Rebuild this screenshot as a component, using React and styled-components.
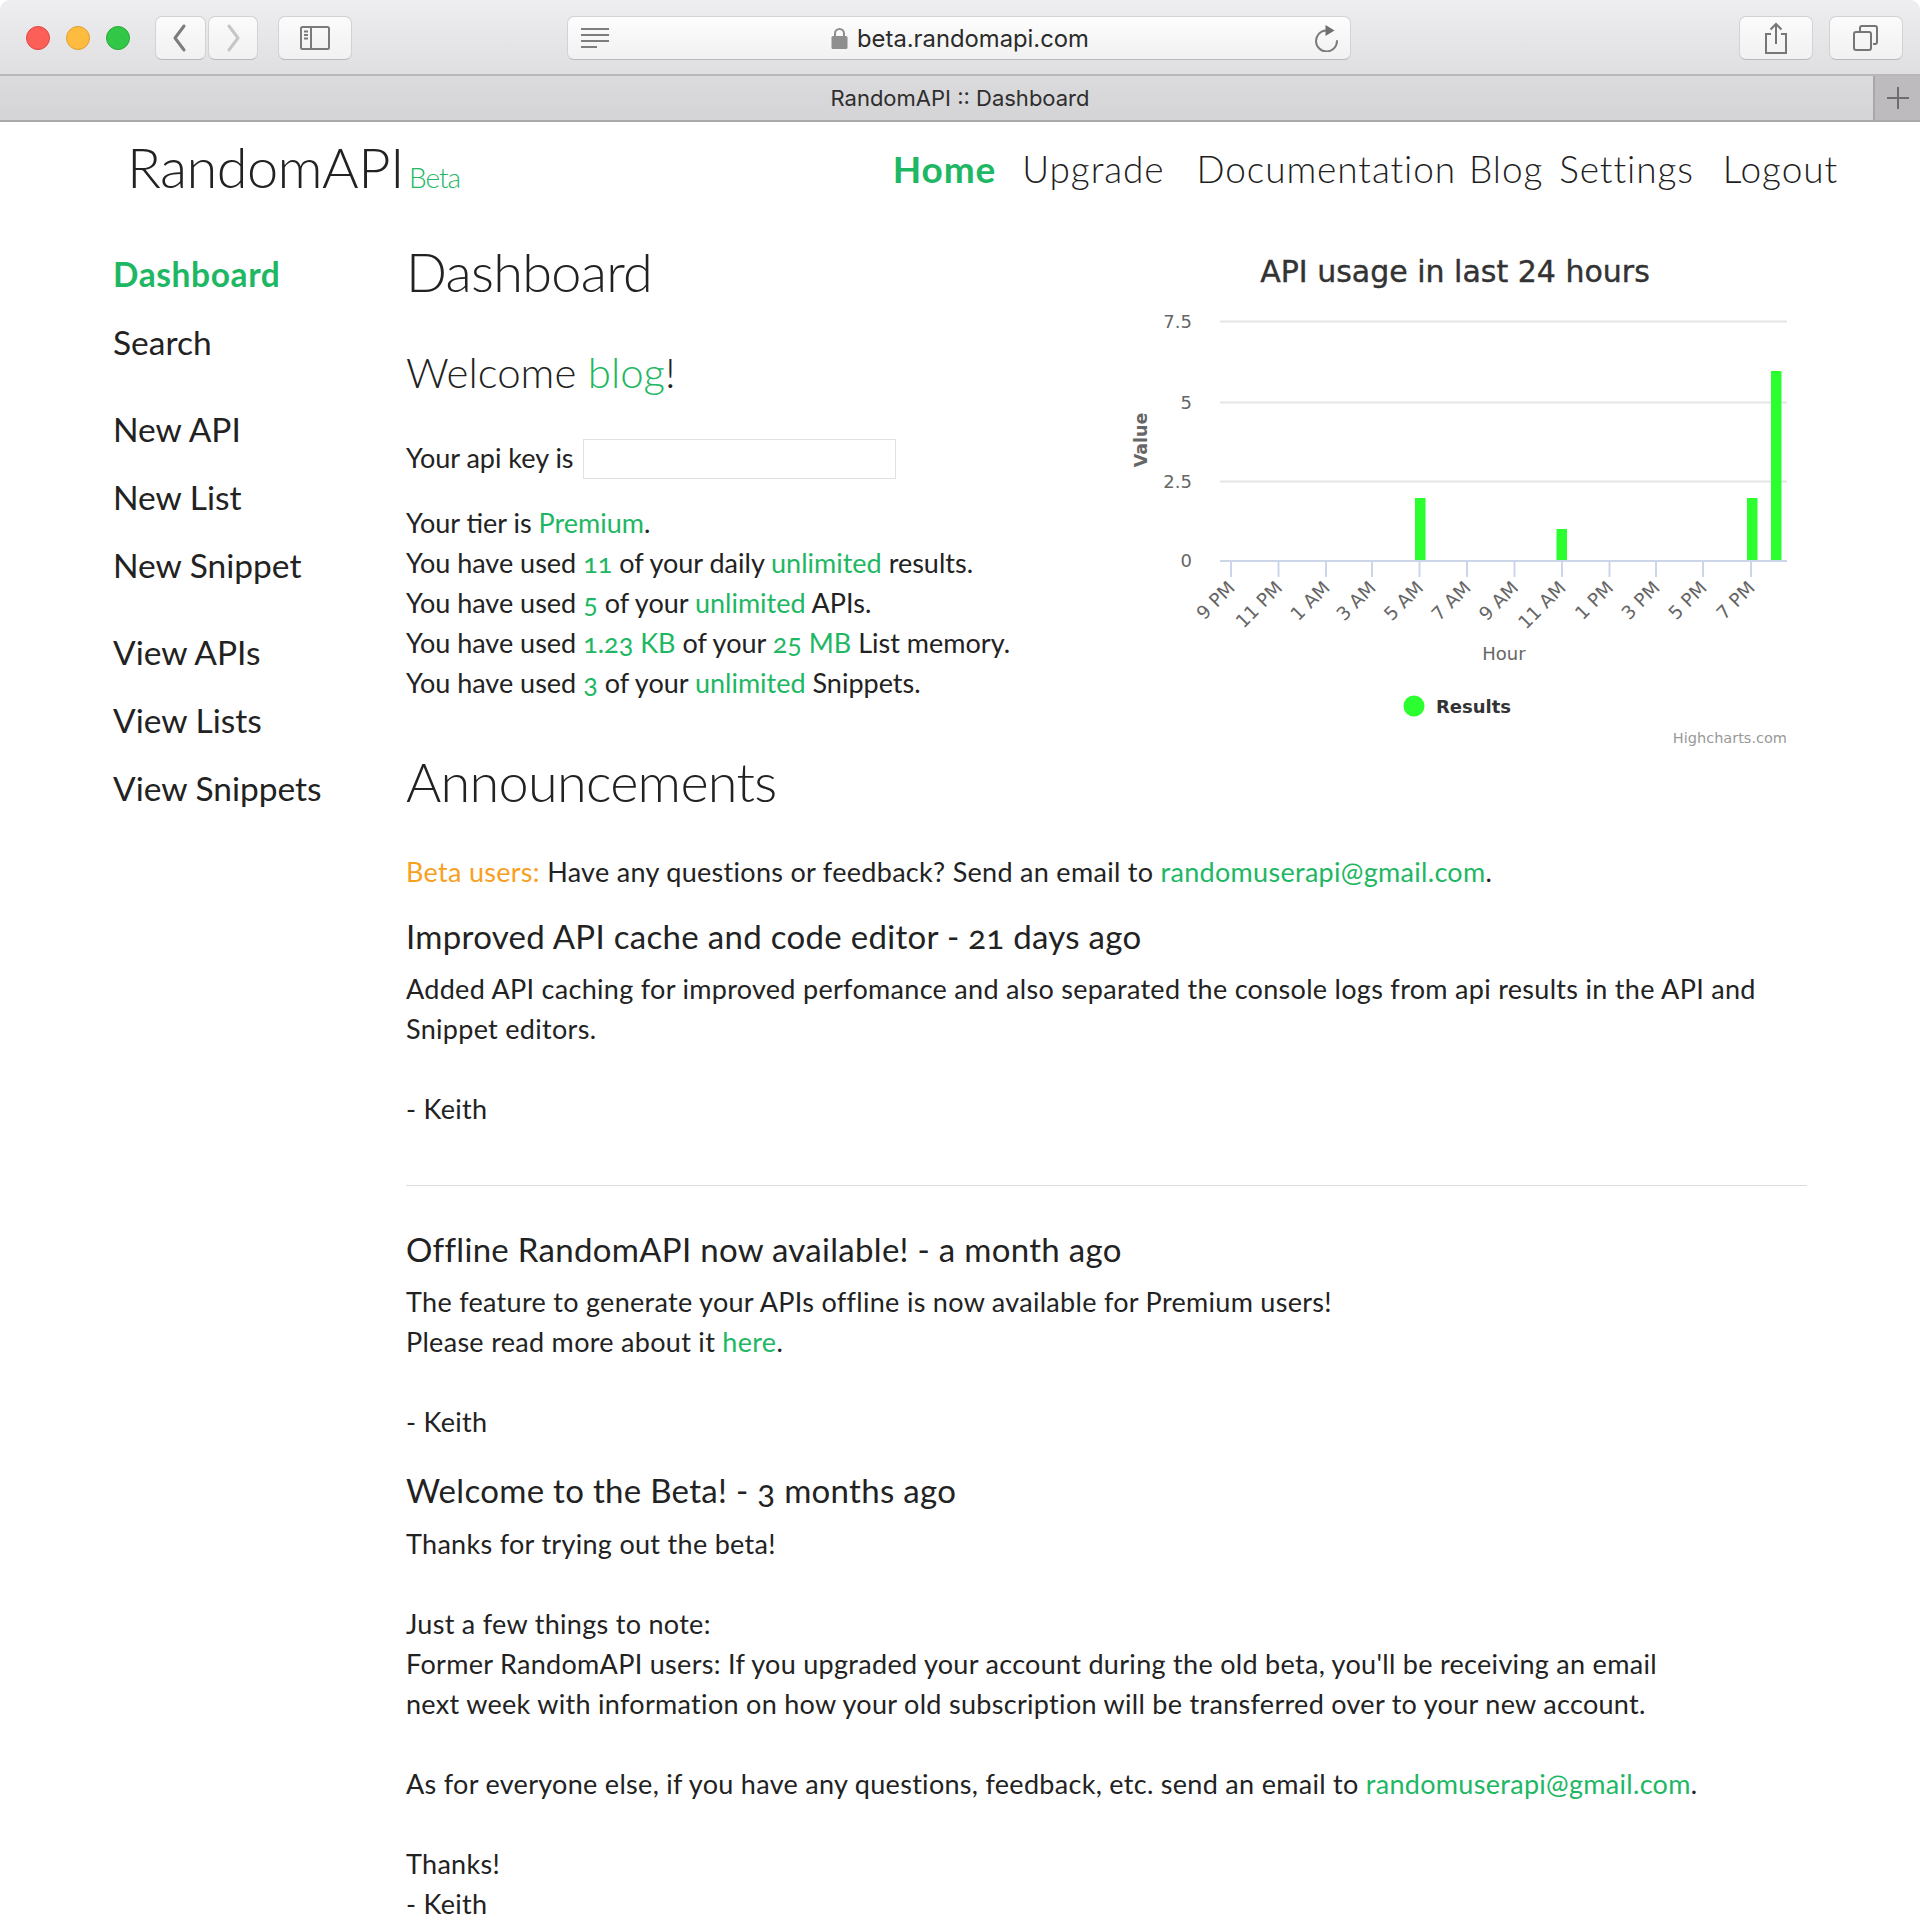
import styled, { createGlobalStyle } from "styled-components";

const GREEN = "#1eb763";

const GlobalStyle = createGlobalStyle`
  html, body {
    margin: 0;
    padding: 0;
    background: #fff;
  }
  body {
    font-family: "Lato", "Open Sans", sans-serif;
    color: #222;
    overflow: hidden;
  }
  #root {
    height: 1920px;
    overflow: hidden;
  }
`;

const Page = styled.div`
  width: 1920px;
`;

const Toolbar = styled.div`
  height: 76px;
  box-sizing: border-box;
  padding: 16px 16px 0 26px;
  display: flex;
  align-items: flex-start;
  background: linear-gradient(#eeedf0, #dfdee1);
  border-bottom: 2px solid #b8b6b9;
  border-radius: 10px 10px 0 0;
`;

const Lights = styled.div`
  display: flex;
  gap: 16px;
  height: 44px;
  align-items: center;
  margin-right: 25px;
`;

const Light = styled.span`
  width: 24px;
  height: 24px;
  border-radius: 50%;
  box-sizing: border-box;
  background: ${(p) => p.$fill};
  border: 1px solid ${(p) => p.$edge};
`;

const ToolButton = styled.div`
  width: ${(p) => p.$w}px;
  height: 44px;
  margin-left: ${(p) => p.$ml || 0}px;
  box-sizing: border-box;
  display: flex;
  align-items: center;
  justify-content: center;
  background: linear-gradient(#fbfbfb, #f1f1f1);
  border: 1px solid #d2d1d3;
  border-bottom-color: #b9b8ba;
  border-radius: 7px;
  flex: none;
`;

const AddressBar = styled.div`
  width: 784px;
  height: 44px;
  margin-left: 215px;
  margin-right: 388px;
  padding: 0 10px 0 12px;
  box-sizing: border-box;
  flex: none;
  display: flex;
  align-items: center;
  background: linear-gradient(#fdfdfd, #f1f1f1);
  border: 1px solid #d2d1d3;
  border-bottom-color: #b9b8ba;
  border-radius: 7px;
`;

const Url = styled.div`
  flex: 1;
  display: flex;
  align-items: center;
  justify-content: center;
  gap: 9px;
  padding-right: 4px;
  font-family: "Inter", "Roboto", sans-serif;
  font-size: 23.8px;
  color: #2b2b2b;
`;

const TabBar = styled.div`
  height: 46px;
  box-sizing: border-box;
  display: flex;
  background: linear-gradient(#dbdadc, #d4d3d5);
  border-bottom: 2px solid #aaa8ab;
`;

const TabTitle = styled.div`
  flex: 1;
  padding-left: 47px;
  text-align: center;
  line-height: 44px;
  font-family: "Inter", "Roboto", sans-serif;
  font-size: 22px;
  color: #2e2e2e;
`;

const NewTab = styled.div`
  width: 47px;
  box-sizing: border-box;
  display: flex;
  align-items: center;
  justify-content: center;
  background: #bdbbbe;
  border-left: 2px solid #a9a7aa;
`;

const Header = styled.header`
  height: 96px;
  box-sizing: border-box;
  padding: 0 82px 0 127px;
  display: flex;
  align-items: center;
  justify-content: space-between;
`;

const Logo = styled.div`
  margin-top: -8px;
  font-size: 56px;
  font-weight: 300;
  letter-spacing: -0.6px;
  color: #222;
  display: flex;
  align-items: baseline;
  gap: 5px;
`;

const LogoTag = styled.span`
  font-size: 28px;
  color: ${GREEN};
  font-weight: 300;
  letter-spacing: -1px;
`;

const Nav = styled.nav`
  display: flex;
  margin-top: -3px;
  font-size: 37px;
  letter-spacing: 0.9px;
`;

const NavItem = styled.a`
  margin-left: ${(p) => p.$ml || 0}px;
  color: ${(p) => (p.$active ? GREEN : "#1f1f1f")};
  font-weight: ${(p) => (p.$active ? 700 : 300)};
`;

const Main = styled.main`
  display: flex;
  padding: 24px 0 0 113px;
`;

const Sidebar = styled.aside`
  width: 293px;
  flex: none;
  padding-top: 12px;
`;

const SideGroup = styled.div`
  margin-bottom: 47px;
  display: flex;
  flex-direction: column;
  gap: 28px;
`;

const SideItem = styled.a`
  font-size: 33.5px;
  line-height: 40px;
  color: ${(p) => (p.$active ? GREEN : "#222")};
  font-weight: ${(p) => (p.$active ? 700 : 400)};
  letter-spacing: ${(p) => (p.$active ? "0.6px" : "0")};
`;

const Content = styled.div`
  width: 1401px;
  flex: none;
`;

const Top = styled.section`
  display: flex;
  justify-content: space-between;
  height: 510px;
`;

const Intro = styled.div`
  width: 700px;
`;

const PageTitle = styled.h1`
  margin: 0;
  font-size: 54px;
  line-height: 60px;
  font-weight: 300;
  letter-spacing: -0.7px;
  color: #222;
`;

const Welcome = styled.h2`
  margin: 45px 0 0;
  font-size: 42px;
  line-height: 50px;
  font-weight: 300;
`;

const Accent = styled.span`
  color: ${(p) => p.$color || GREEN};
`;

const KeyRow = styled.div`
  margin-top: 40px;
  display: flex;
  align-items: center;
  gap: 9px;
`;

const KeyBox = styled.div`
  width: 313px;
  height: 40px;
  margin-top: 2px;
  box-sizing: border-box;
  border: 1px solid #e2e2e2;
`;

const Text = styled.div`
  font-size: 27px;
  line-height: 40px;
  font-variant-numeric: oldstyle-nums;
`;

const BodyText = styled(Text)`
  margin-top: ${(p) => p.$mt || 0}px;
  letter-spacing: 0.3px;
`;

const Stats = styled.div`
  margin-top: 24px;
`;

const ChartWrap = styled.div`
  width: 680px;
  margin-top: -2px;
  flex: none;
`;

const ChartSvg = styled.svg`
  display: block;
  font-family: "DejaVu Sans", sans-serif;
`;

const Item = styled.article`
  margin-top: ${(p) => p.$mt}px;
`;

const ItemTitle = styled.h3`
  margin: 0 0 ${(p) => p.$mb || 13}px;
  font-size: 33px;
  line-height: 40px;
  font-weight: 400;
  letter-spacing: 0.3px;
  font-variant-numeric: oldstyle-nums;
`;

const Rule = styled.hr`
  margin: 56px 0 0;
  border: 0;
  border-top: 1px solid #ddd;
`;

const Chevron = ({ d, color }) => (
  <svg width="20" height="30" viewBox="0 0 20 30" fill="none">
    <path d={d} stroke={color} strokeWidth="3" strokeLinecap="round" strokeLinejoin="round" />
  </svg>
);

const SidebarIcon = () => (
  <svg width="30" height="24" viewBox="0 0 30 24" fill="none" stroke="#7b7b7b" strokeWidth="2">
    <rect x="1" y="1" width="28" height="22" rx="1.5" />
    <path d="M11 1v22" />
    <path d="M4 5.5h4M4 9h4M4 12.5h4" />
  </svg>
);

const ReaderIcon = () => (
  <svg width="30" height="22" viewBox="0 0 30 22" fill="none" stroke="#7d7d7d" strokeWidth="2">
    <path d="M1 2h28M1 8h28M1 14h28M1 20h16" />
  </svg>
);

const LockIcon = () => (
  <svg width="17" height="21" viewBox="0 0 17 21">
    <rect x="0.5" y="8" width="16" height="13" rx="1.5" fill="#8e8e8e" />
    <path d="M4 9V5.5a4.5 4.5 0 0 1 9 0V9" fill="none" stroke="#8e8e8e" strokeWidth="2" />
  </svg>
);

const ReloadIcon = () => (
  <svg width="26" height="28" viewBox="0 0 26 28" fill="none">
    <path d="M12 6.5A10.5 10.5 0 1 0 23 17" stroke="#7b7b7b" strokeWidth="2" strokeLinecap="round" />
    <path d="M11.5 1l9 5.5-9 5.5z" fill="#6f6f6f" />
  </svg>
);

const ShareIcon = () => (
  <svg width="24" height="32" viewBox="0 0 24 32" fill="none" stroke="#767676" strokeWidth="2">
    <path d="M7 12H2v19h20V12h-5" />
    <path d="M12 22V2M6.5 7.5 12 2l5.5 5.5" />
  </svg>
);

const TabsIcon = () => (
  <svg width="26" height="26" viewBox="0 0 26 26" fill="none" stroke="#767676" strokeWidth="2">
    <rect x="1" y="7" width="17" height="18" rx="2" />
    <path d="M7 6V3a2 2 0 0 1 2-2h13a2 2 0 0 1 2 2v14a2 2 0 0 1-2 2h-2" />
  </svg>
);

const PlusIcon = () => (
  <svg width="22" height="22" viewBox="0 0 22 22" stroke="#6d6d6d" strokeWidth="2">
    <path d="M11 0v22M0 11h22" />
  </svg>
);

const tickLabels = ["9 PM", "11 PM", "1 AM", "3 AM", "5 AM", "7 AM", "9 AM", "11 AM", "1 PM", "3 PM", "5 PM", "7 PM"];
const ticks = [1231, 1278.5, 1326, 1372, 1419.5, 1467, 1514.5, 1562, 1609.5, 1656, 1703, 1751];
const gridLines = [
  { y: 321, label: "7.5" },
  { y: 402, label: "5" },
  { y: 481, label: "2.5" },
];
const bars = [
  { x: 1415, top: 498 },
  { x: 1556.5, top: 529 },
  { x: 1747, top: 498 },
  { x: 1771, top: 371 },
];

// the svg starts at page x 1127 / y 240, viewBox uses page coordinates
const UsageChart = () => (
  <ChartSvg width="680" height="510" viewBox="1127 240 680 510">
    <text x="1455" y="282" textAnchor="middle" fontSize="30" fill="#333" stroke="#333" strokeWidth="0.4">API usage in last 24 hours</text>
    {gridLines.map((g) => (
      <g key={g.y}>
        <path d={`M1220 ${g.y + 0.5}H1787`} stroke="#e6e6e6" strokeWidth="2" />
        <text x="1192" y={g.y + 7} textAnchor="end" fontSize="18" fill="#666">{g.label}</text>
      </g>
    ))}
    <text x="1192" y="567" textAnchor="end" fontSize="18" fill="#666">0</text>
    <text transform="translate(1147 440) rotate(-90)" textAnchor="middle" fontSize="17.5" fontWeight="700" fill="#666">Value</text>
    {bars.map((b) => (
      <rect key={b.x} x={b.x} y={b.top} width="10.5" height={560 - b.top} fill="#2bff2f" />
    ))}
    <path d="M1220 561H1787" stroke="#ccd6eb" strokeWidth="2" />
    {ticks.map((x, i) => (
      <g key={x}>
        <path d={`M${x} 561V577`} stroke="#ccd6eb" strokeWidth="2" />
        <text transform={`translate(${x + 5} 589) rotate(-45)`} textAnchor="end" fontSize="18.5" fill="#666">{tickLabels[i]}</text>
      </g>
    ))}
    <text x="1504" y="660" textAnchor="middle" fontSize="18" fill="#666">Hour</text>
    <circle cx="1414" cy="706" r="10.5" fill="#2bff2f" />
    <text x="1436" y="713" fontSize="18" fontWeight="700" fill="#333">Results</text>
    <text x="1787" y="743" textAnchor="end" fontSize="14.5" fill="#999">Highcharts.com</text>
  </ChartSvg>
);

export default function App() {
  return (
    <Page>
      <GlobalStyle />
      <Toolbar>
        <Lights>
          <Light $fill="#fc5f57" $edge="#e2463f" />
          <Light $fill="#fdbc40" $edge="#df9f2b" />
          <Light $fill="#33c748" $edge="#27aa35" />
        </Lights>
        <ToolButton $w={51}><Chevron d="M13 3 4 15l9 12" color="#7c7c7c" /></ToolButton>
        <ToolButton $w={50} $ml={2}><Chevron d="M6 3l9 12-9 12" color="#c6c6c6" /></ToolButton>
        <ToolButton $w={74} $ml={20}><SidebarIcon /></ToolButton>
        <AddressBar>
          <ReaderIcon />
          <Url><LockIcon />beta.randomapi.com</Url>
          <ReloadIcon />
        </AddressBar>
        <ToolButton $w={74}><ShareIcon /></ToolButton>
        <ToolButton $w={74} $ml={16}><TabsIcon /></ToolButton>
      </Toolbar>
      <TabBar>
        <TabTitle>RandomAPI :: Dashboard</TabTitle>
        <NewTab><PlusIcon /></NewTab>
      </TabBar>
      <Header>
        <Logo>RandomAPI<LogoTag>Beta</LogoTag></Logo>
        <Nav>
          <NavItem $active>Home</NavItem>
          <NavItem $ml={26}>Upgrade</NavItem>
          <NavItem $ml={32}>Documentation</NavItem>
          <NavItem $ml={13}>Blog</NavItem>
          <NavItem $ml={16}>Settings</NavItem>
          <NavItem $ml={29}>Logout</NavItem>
        </Nav>
      </Header>
      <Main>
        <Sidebar>
          <SideGroup>
            <SideItem $active>Dashboard</SideItem>
            <SideItem>Search</SideItem>
          </SideGroup>
          <SideGroup>
            <SideItem>New API</SideItem>
            <SideItem>New List</SideItem>
            <SideItem>New Snippet</SideItem>
          </SideGroup>
          <SideGroup>
            <SideItem>View APIs</SideItem>
            <SideItem>View Lists</SideItem>
            <SideItem>View Snippets</SideItem>
          </SideGroup>
        </Sidebar>
        <Content>
          <Top>
            <Intro>
              <PageTitle>Dashboard</PageTitle>
              <Welcome>Welcome <Accent>blog</Accent>!</Welcome>
              <KeyRow>
                <Text>Your api key is</Text>
                <KeyBox />
              </KeyRow>
              <Stats>
                <Text>Your tier is <Accent>Premium</Accent>.</Text>
                <Text>You have used <Accent>11</Accent> of your daily <Accent>unlimited</Accent> results.</Text>
                <Text>You have used <Accent>5</Accent> of your <Accent>unlimited</Accent> APIs.</Text>
                <Text>You have used <Accent>1.23 KB</Accent> of your <Accent>25 MB</Accent> List memory.</Text>
                <Text>You have used <Accent>3</Accent> of your <Accent>unlimited</Accent> Snippets.</Text>
              </Stats>
            </Intro>
            <ChartWrap>
              <UsageChart />
            </ChartWrap>
          </Top>
          <PageTitle>Announcements</PageTitle>
          <BodyText $mt={40}>
            <Accent $color="#f7a022">Beta users:</Accent> Have any questions or feedback? Send an email to <Accent>randomuserapi@gmail.com</Accent>.
          </BodyText>
          <Item $mt={24}>
            <ItemTitle>Improved API cache and code editor - 21 days ago</ItemTitle>
            <BodyText>
              Added API caching for improved perfomance and also separated the console logs from api results in the API and<br />
              Snippet editors.<br /><br />
              - Keith
            </BodyText>
          </Item>
          <Rule />
          <Item $mt={43}>
            <ItemTitle>Offline RandomAPI now available! - a month ago</ItemTitle>
            <BodyText>
              The feature to generate your APIs offline is now available for Premium users!<br />
              Please read more about it <Accent>here</Accent>.<br /><br />
              - Keith
            </BodyText>
          </Item>
          <Item $mt={28}>
            <ItemTitle $mb={14}>Welcome to the Beta! - 3 months ago</ItemTitle>
            <BodyText>
              Thanks for trying out the beta!<br /><br />
              Just a few things to note:<br />
              Former RandomAPI users: If you upgraded your account during the old beta, you'll be receiving an email<br />
              next week with information on how your old subscription will be transferred over to your new account.<br /><br />
              As for everyone else, if you have any questions, feedback, etc. send an email to <Accent>randomuserapi@gmail.com</Accent>.<br /><br />
              Thanks!<br />
              - Keith
            </BodyText>
          </Item>
        </Content>
      </Main>
    </Page>
  );
}
